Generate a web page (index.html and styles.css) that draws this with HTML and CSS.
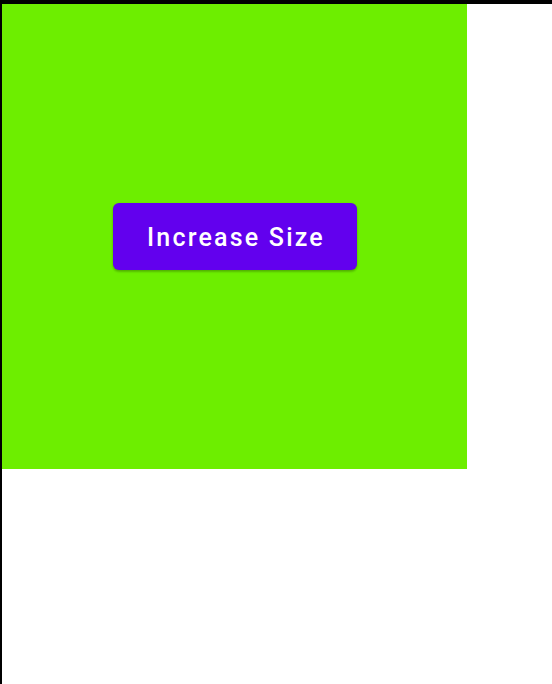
FILE: index.html
```html
<!DOCTYPE html>
<html>
<head>
<meta charset="utf-8">
<link rel="stylesheet" href="styles.css">
</head>
<body>
<div class="frame">
  <div class="box">
    <button class="btn">Increase Size</button>
  </div>
</div>
</body>
</html>
```
FILE: styles.css
```css
html, body {
  margin: 0;
  padding: 0;
  background: #ffffff;
}
.frame {
  box-sizing: border-box;
  width: 552px;
  height: 684px;
  border-top: 4px solid #000;
  border-left: 2px solid #000;
}
.box {
  width: 465px;
  height: 465px;
  background: #6dee00;
  display: flex;
  align-items: center;
  justify-content: center;
}
.btn {
  width: 244px;
  height: 67px;
  margin-left: 1px;
  border: none;
  border-radius: 6px;
  background: #6200ee;
  color: #ffffff;
  font-family: Roboto, "Liberation Sans", sans-serif;
  font-weight: 500;
  font-size: 25px;
  letter-spacing: 2.2px;
  padding: 2px 0 0 2px;
  box-shadow: 0 1px 3px rgba(0,0,0,0.2), 0 2px 2px rgba(0,0,0,0.12);
}
```
